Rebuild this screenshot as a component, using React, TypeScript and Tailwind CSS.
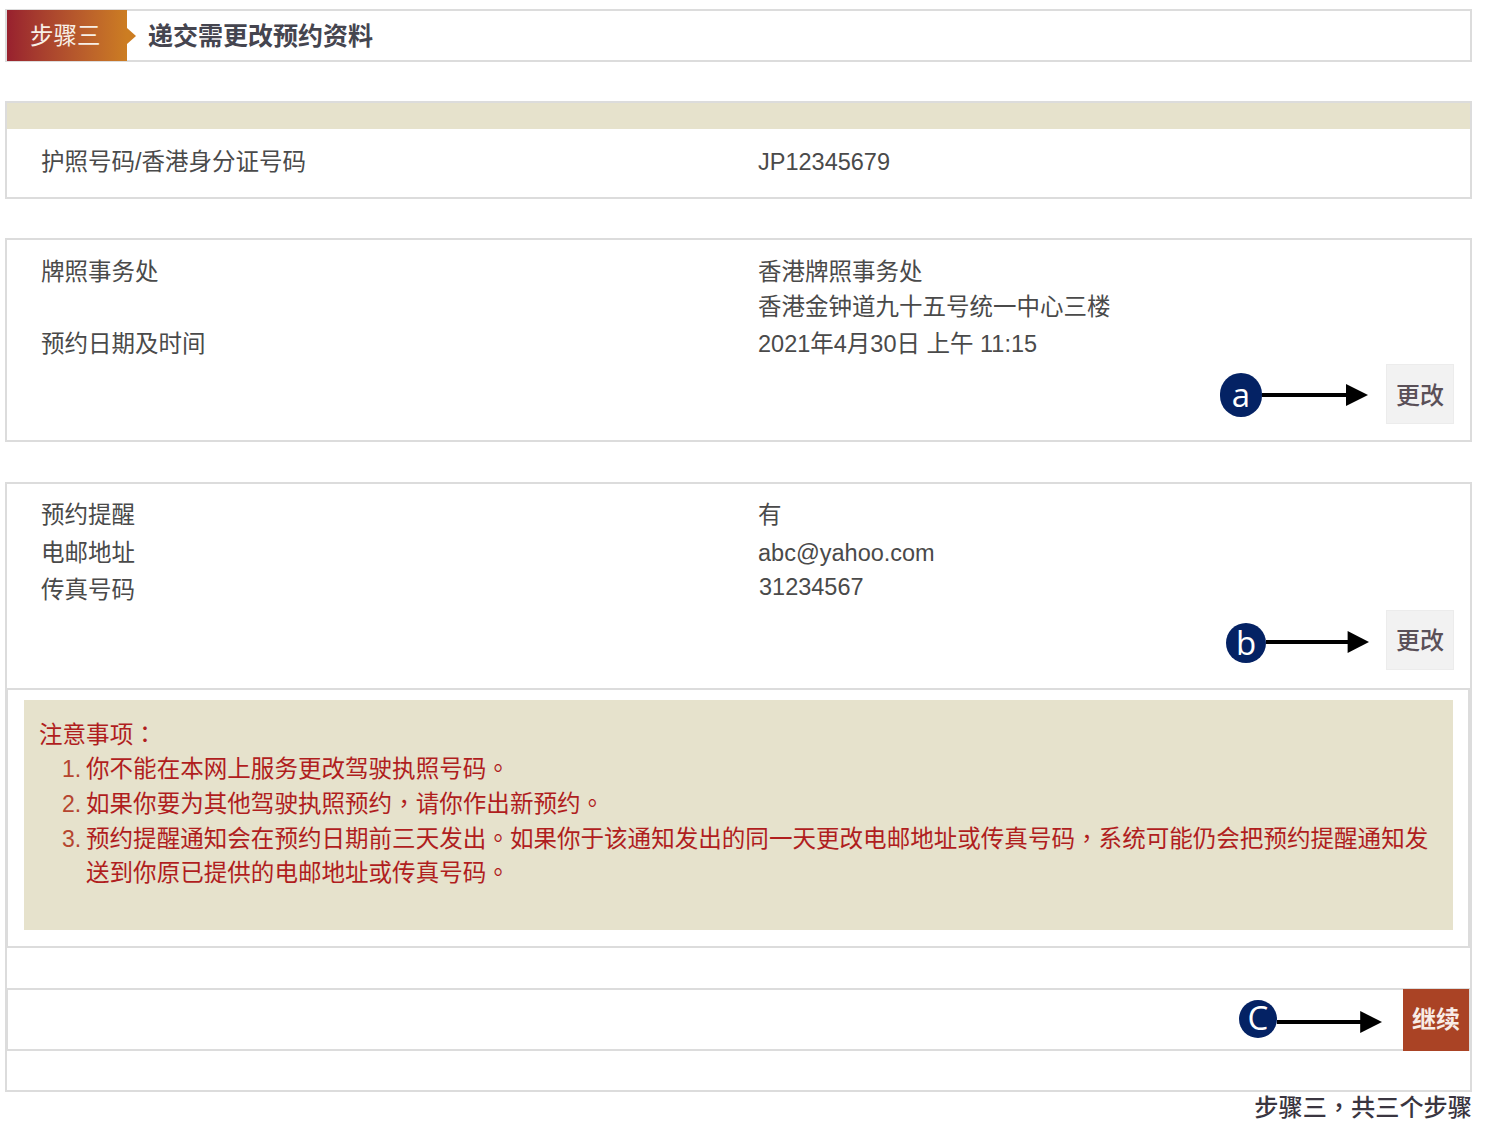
const cjk = "font-['Liberation_Sans','Noto_Sans_CJK_SC',sans-serif]";

// the reference has centred full-width punctuation, which only the TC font draws
const Punct = ({ text }: { text: string }) => (
  <>
    {text.split(/([。，：])/).map((part, i) =>
      /^[。，：]$/.test(part) ? (
        <span key={i} className="font-['Noto_Sans_CJK_TC',sans-serif] leading-none">
          {part}
        </span>
      ) : (
        part
      ),
    )}
  </>
);

const Annotation = ({
  letter,
  circle,
  arrow,
  className,
}: {
  letter: string;
  circle: string;
  arrow: string;
  className?: string;
}) => (
  <div className={`flex items-center ${className ?? ""}`}>
    <div
      className={`flex ${circle} items-center justify-center rounded-full bg-[#042264] pb-[2px] font-['Open_Sans',sans-serif] text-[33px] font-medium leading-none text-white`}
    >
      {letter}
    </div>
    <svg viewBox="0 0 106 24" preserveAspectRatio="none" className={`${arrow} h-[24px]`}>
      <rect x="0" y="10" width="86" height="4" fill="#000" />
      <polygon points="84,1 106,12 84,23" fill="#000" />
    </svg>
  </div>
);

const EditButton = () => (
  <button className="flex h-[60px] w-[68px] items-center justify-center border border-[#ececec] bg-[#f2f2f2] pt-[2px] text-[24px] font-medium text-[#5a5058]">
    更改
  </button>
);

const Row = ({ label, children }: { label: string; children: React.ReactNode }) => (
  <div className="grid grid-cols-[717px_1fr] pl-[34px]">
    <div>{label}</div>
    <div>{children}</div>
  </div>
);

const notes = [
  "你不能在本网上服务更改驾驶执照号码。",
  "如果你要为其他驾驶执照预约，请你作出新预约。",
  "预约提醒通知会在预约日期前三天发出。如果你于该通知发出的同一天更改电邮地址或传真号码，系统可能仍会把预约提醒通知发送到你原已提供的电邮地址或传真号码。",
];

export default function App() {
  return (
    <div className={`min-h-screen bg-white pl-[5px] pt-[9px] ${cjk} text-[23.5px] text-[#4a4a4a]`}>
      <div className="w-[1467px]">
        <header className="flex h-[53px] items-stretch border-2 border-[#dcdcdc]">
          <div className="relative -my-px flex w-[120px] items-center bg-gradient-to-r from-[#98202e] to-[#cc7d22] pl-[23px] pt-[3px] text-[#f7efe6]">
            步骤三
            <span className="absolute left-full top-1/2 -translate-y-1/2 border-y-[8px] border-l-[9px] border-y-transparent border-l-[#cc7d22]" />
          </div>
          <h1 className="ml-[21px] flex items-center pt-[3px] text-[25px] font-semibold text-[#45454f]">
            递交需更改预约资料
          </h1>
        </header>

        <section className="mt-[39px] h-[98px] border-2 border-[#dcdcdc]">
          <div className="h-[26px] bg-[#e6e2cc]" />
          <div className="pt-[16px] leading-[35px]">
            <Row label="护照号码/香港身分证号码">JP12345679</Row>
          </div>
        </section>

        <section className="mt-[39px] h-[204px] border-2 border-[#dcdcdc] pt-[15px] leading-[35px]">
          <Row label="牌照事务处">
            香港牌照事务处
            <br />
            香港金钟道九十五号统一中心三楼
          </Row>
          <div className="mt-[2px]">
            <Row label="预约日期及时间">2021年4月30日 上午 11:15</Row>
          </div>
          <div className="mt-[2px] flex items-center justify-end pr-[16px]">
            <Annotation letter="a" circle="h-[44px] w-[42px]" arrow="w-[106px]" className="mr-[18px] mt-[2px]" />
            <EditButton />
          </div>
        </section>

        <section className="mt-[40px] h-[610px] border-2 border-[#dcdcdc]">
          <div className="h-[123px] pt-[13px] leading-[37.5px]">
            <Row label="预约提醒">有</Row>
            <Row label="电邮地址">abc@yahoo.com</Row>
            <Row label="传真号码">
              <span className="-mt-[3px] block pl-px">31234567</span>
            </Row>
          </div>
          <div className="flex h-[81px] items-start justify-end pr-[16px] pt-[3px]">
            <Annotation letter="b" circle="mt-[3px] h-[40px] w-[40px]" arrow="w-[103px]" className="mr-[17px] mt-[10px]" />
            <EditButton />
          </div>
          <div className="-ml-px h-[260px] border-2 border-[#dcdcdc] pl-[16px] pr-[15px] pt-[10px]">
            <div className="h-[230px] w-[1429px] bg-[#e6e2cc] pl-[15px] pt-[17.5px] text-[23.56px] leading-[34.7px] text-[#b01e1e]">
              <p>
                <Punct text="注意事项：" />
              </p>
              <ol>
                {notes.map((note, i) => (
                  <li key={note} className="flex">
                    <span className="w-[47px] shrink-0 pl-[23px] text-[23px] font-light text-[#b5452f]">{i + 1}.</span>
                    <span className="w-[1352px]">
                      <Punct text={note} />
                    </span>
                  </li>
                ))}
              </ol>
            </div>
          </div>
          <div className="-ml-px mt-[40px] flex h-[63px] items-center justify-end border-2 border-[#dcdcdc]">
            <Annotation letter="C" circle="-mt-[6px] h-[38px] w-[38px]" arrow="w-[105px]" className="mr-[21px] mt-[4px]" />
            <button className="-mr-px flex h-[62px] w-[66px] items-center justify-center bg-[#aa4325] text-[24px] font-bold text-[#f8ece6]">
              继续
            </button>
          </div>
        </section>

        <p className="mt-[1px] text-right text-[24.2px] font-medium leading-[30px] text-[#3a3540]">
          <Punct text="步骤三，共三个步骤" />
        </p>
      </div>
    </div>
  );
}
